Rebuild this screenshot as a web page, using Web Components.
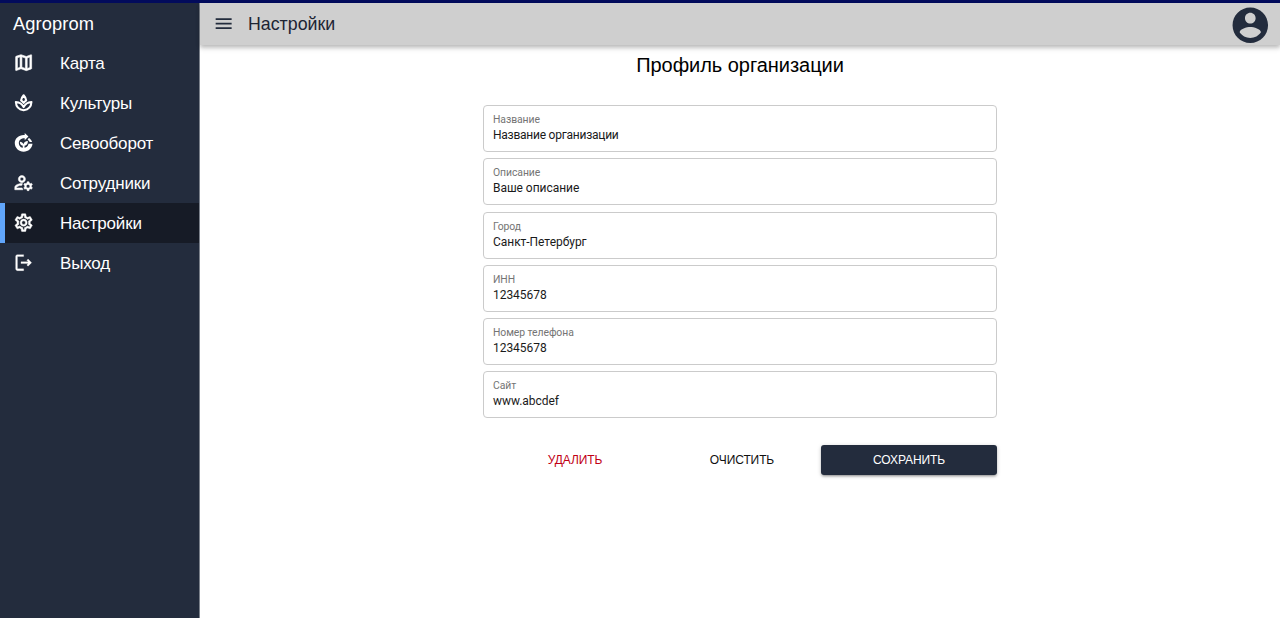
<!DOCTYPE html>
<html lang="ru">
<head>
<meta charset="utf-8">
<title>Agroprom</title>
<style>html,body{margin:0;height:100%;overflow:hidden;background:#fff}</style>
</head>
<body>
<agro-app></agro-app>
<script>
const ICONS = {
  map: '<path d="M20.5 3l-.16.03L15 5.1 9 3 3.36 4.9c-.21.07-.36.25-.36.48V20.5c0 .28.22.5.5.5l.16-.03L9 18.9l6 2.1 5.64-1.9c.21-.07.36-.25.36-.48V3.5c0-.28-.22-.5-.5-.5zM10 5.47l4 1.4v11.66l-4-1.4V5.47zm-5 .99l3-1.01v11.7l-3 1.16V6.46zm14 11.08l-3 1.01V6.86l3-1.16v11.84z" stroke="currentColor" stroke-width=".7"/>',
  spa: '<g fill="none" stroke="currentColor" stroke-width="2.300" stroke-linejoin="round"><path d="M12 20.6C6.400 19.600 3.400 16.200 3.200 11.200c4.400.300 7.200 2.300 8.800 5.900 1.600-3.600 4.400-5.600 8.800-5.900-.2 5-3.200 8.400-8.800 9.400z"/><path d="M9.100 9.400C9.600 7 10.500 5.300 12 3.700c1.500 1.600 2.400 3.300 2.900 5.700-1.200.8-2.100 1.700-2.900 2.800-.8-1.100-1.700-2-2.900-2.800z"/></g>',
  compost: '<path d="M13.200 1L17.400 5.200l-4.200 4.200V7C9.400 6.600 6.600 9.200 6.600 12.300c0 3.200 2.400 5.600 5.400 5.600 2.900 0 5-1.900 5.500-4.600H22C21.400 18.600 17.200 22.200 12 22.200 6.300 22.200 2 17.800 2 12.400 2 7.100 6.600 2.800 13.200 3.300z"/><path d="M11 18.500v-3C8.800 15.200 7.700 13.500 7.700 11c2 0 3.500 1 4.100 2.800.5-2.300 2-3.600 5-3.700 0 3.300-1.300 5-3.800 5.500v2.900z"/><path d="M17.900 6.400c1.800 1.300 3 2.900 3.600 5h-2.700c-.4-1.200-1.200-2-2.300-2.800z"/>',
  staff: '<path d="M4 18v-.65c0-.34.16-.66.41-.81C6.1 15.53 8.03 15 10 15c.03 0 .05 0 .08.01.1-.7.3-1.370.590-1.980-.22-.02-.44-.03-.67-.03-2.420 0-4.680.670-6.610 1.820-.88.520-1.390 1.500-1.390 2.530V20h9.260c-.42-.6-.75-1.280-.97-2H4zM10 12c2.210 0 4-1.790 4-4s-1.790-4-4-4-4 1.790-4 4 1.790 4 4 4zm0-6c1.100 0 2 .9 2 2s-.9 2-2 2-2-.9-2-2 .9-2 2-2zM20.750 16c0-.22-.03-.42-.06-.63l1.140-1.010-1-1.730-1.450.490c-.32-.27-.68-.48-1.080-.63L18 11h-2l-.3 1.490c-.4.150-.76.360-1.080.630l-1.450-.49-1 1.730 1.140 1.010c-.03.210-.06.410-.06.630s.030.420.060.630l-1.140 1.010 1 1.730 1.450-.49c.320.270.680.480 1.080.630L16 21h2l.3-1.490c.4-.15.760-.36 1.080-.63l1.450.490 1-1.730-1.140-1.010c.030-.21.060-.41.060-.63zM17 18c-1.100 0-2-.9-2-2s.9-2 2-2 2 .9 2 2-.9 2-2 2z" stroke="currentColor" stroke-width=".6"/>',
  gear: '<path d="M19.43 12.98c.04-.32.07-.64.07-.98 0-.34-.03-.66-.07-.98l2.11-1.65c.19-.15.24-.42.12-.64l-2-3.460c-.09-.16-.26-.25-.44-.25-.06 0-.12.010-.17.030l-2.490 1c-.52-.4-1.080-.73-1.690-.98l-.38-2.650C14.460 2.180 14.250 2 14 2h-4c-.25 0-.46.180-.49.420l-.38 2.650c-.61.250-1.170.590-1.690.980l-2.490-1c-.06-.02-.12-.03-.18-.03-.17 0-.34.090-.43.250l-2 3.460c-.13.220-.07.490.120.640l2.110 1.650c-.04.320-.07.650-.07.980 0 .330.030.660.070.980l-2.110 1.650c-.19.150-.24.420-.12.640l2 3.460c.09.160.26.250.44.250.06 0 .12-.01.17-.03l2.490-1c.52.4 1.080.730 1.690.980l.38 2.650c.03.240.24.420.49.420h4c.25 0 .46-.18.49-.42l.38-2.650c.61-.25 1.170-.59 1.690-.98l2.490 1c.06.020.12.030.18.030.17 0 .34-.09.43-.25l2-3.460c.12-.22.070-.49-.12-.64l-2.110-1.650zm-1.980-1.710c.04.310.05.520.05.730 0 .210-.02.430-.05.730l-.14 1.130.89.7 1.080.840-.7 1.210-1.270-.51-1.040-.42-.9.680c-.43.320-.84.560-1.250.730l-1.060.430-.16 1.130-.2 1.350h-1.400l-.19-1.350-.16-1.130-1.060-.43c-.43-.18-.83-.41-1.230-.71l-.91-.7-1.060.430-1.270.510-.7-1.210 1.080-.84.890-.7-.14-1.130c-.03-.31-.05-.54-.05-.74s.02-.43.05-.73l.14-1.130-.89-.7-1.080-.84.7-1.210 1.270.510 1.040.420.9-.68c.43-.32.840-.56 1.250-.73l1.060-.43.160-1.130.2-1.350h1.390l.19 1.350.16 1.130 1.060.430c.43.180.830.410 1.230.710l.91.7 1.060-.43 1.270-.51.7 1.210-1.070.850-.89.7.14 1.130zM12 8c-2.210 0-4 1.790-4 4s1.790 4 4 4 4-1.790 4-4-1.790-4-4-4zm0 6c-1.100 0-2-.9-2-2s.9-2 2-2 2 .9 2 2-.9 2-2 2z" stroke="currentColor" stroke-width=".5"/>',
  logout: '<path d="M17 8l-1.410 1.410L17.170 11H9v2h8.170l-1.580 1.580L17 16l4-4-4-4zM5 5h7V3H5c-1.100 0-2 .9-2 2v14c0 1.100.9 2 2 2h7v-2H5V5z" stroke="currentColor" stroke-width=".3"/>',
  menu: '<path d="M3 18h18v-2H3v2zm0-5h18v-2H3v2zm0-7v2h18V6H3z"/>',
  account: '<path d="M12 2C6.480 2 2 6.480 2 12s4.480 10 10 10 10-4.480 10-10S17.520 2 12 2zm0 3c1.660 0 3 1.340 3 3s-1.340 3-3 3-3-1.340-3-3 1.340-3 3-3zm0 14.200c-2.500 0-4.710-1.280-6-3.220.03-1.990 4-3.080 6-3.080 1.990 0 5.970 1.090 6 3.080-1.290 1.940-3.500 3.220-6 3.220z"/>'
};
function define(name, render) {
  customElements.define(name, class extends HTMLElement {
    connectedCallback() {
      if (!this.shadowRoot) this.attachShadow({mode: 'open'}).innerHTML = render(this);
    }
  });
}
define('agro-icon', el => `
  <style>:host{display:block;flex:none;width:21.3px;height:21.3px}svg{display:block;width:100%;height:100%;fill:currentColor}</style>
  <svg viewBox="0 0 24 24">${ICONS[el.getAttribute('name')]}</svg>`);
define('agro-nav-item', el => `
  <style>
    :host{display:flex;align-items:center;height:40px;box-sizing:border-box;padding:0 0 0 13px;color:#fff;font-size:17px;letter-spacing:-.18px}
    :host([active]){background:#161b26;border-left:5px solid #60a5fa;padding-left:8px}
    agro-icon{margin-right:25.7px}
    span{padding-top:2px}
  </style>
  <agro-icon name="${el.getAttribute('icon')}"></agro-icon><span><slot></slot></span>`);
define('agro-sidebar', () => `
  <style>
    :host{display:block;background:#232c3d;border-right:1px solid #7b818b;box-sizing:border-box;color:#fff}
    .brand{height:40px;line-height:41px;padding-left:13px;font-size:18.3px;letter-spacing:.1px}
  </style>
  <div class="brand">Agroprom</div><slot></slot>`);
define('agro-toolbar', () => `
  <style>
    :host{display:flex;align-items:center;height:42px;box-sizing:border-box;padding:0 8px 0 13px;background:#cfcfcf;color:#232c3d;box-shadow:0 2px 4px #0003,0 4px 5px #0000001a;font-size:17.8px}
    .menu{width:21.3px;height:21.3px;margin:0 13.7px 0 0}
    .user{width:42.6px;height:42.6px;margin:3px 0 0 auto}
    span{color:#1d2433}
  </style>
  <agro-icon class="menu" name="menu"></agro-icon><span><slot></slot></span><agro-icon class="user" name="account"></agro-icon>`);
define('agro-field', el => `
  <style>
    :host{display:block;height:47px;box-sizing:border-box;border:1px solid #cbcbcb;border-radius:4px;padding:7px 9px 0;font-family:Roboto,"Liberation Sans",sans-serif}
    .label{font-size:10.4px;line-height:14px;color:#747474;letter-spacing:-.07px}
    .value{font-size:12px;line-height:16px;color:#1a1a1a;letter-spacing:var(--value-spacing,-.04px)}
  </style>
  <div class="label">${el.getAttribute('label')}</div><div class="value"><slot></slot></div>`);
define('agro-button', () => `
  <style>
    :host{display:flex;align-items:center;justify-content:center;height:30px;box-sizing:border-box;padding-bottom:1px;border-radius:3px;font-size:12px;letter-spacing:-.1px;color:#111}
    :host([kind=danger]){color:#c10015}
    :host([kind=primary]){background:#232c3d;color:#fff;box-shadow:0 1px 4px #0003,0 2px 2px #00000024,0 3px 1px -2px #0000001f}
  </style><span><slot></slot></span>`);
define('agro-profile', () => `
  <style>
    :host{display:block;width:514px;margin:0 auto}
    h1{margin:0 0 29px;padding-top:9px;height:22px;line-height:22px;text-align:center;font-size:20px;font-weight:400;color:#000;letter-spacing:-.04px}
    .fields{display:grid;row-gap:6.25px}
    .wide-text{--value-spacing:-.24px}
    .actions{display:grid;grid-template-columns:184px 150px 4px 176px;margin-top:26.9px}
    .actions agro-button:last-child{grid-column:4}
  </style>
  <h1>Профиль организации</h1>
  <div class="fields">
    <agro-field class="wide-text" label="Название">Название организации</agro-field>
    <agro-field label="Описание">Ваше описание</agro-field>
    <agro-field label="Город">Санкт-Петербург</agro-field>
    <agro-field label="ИНН">12345678</agro-field>
    <agro-field label="Номер телефона">12345678</agro-field>
    <agro-field label="Сайт">www.abcdef</agro-field>
  </div>
  <div class="actions">
    <agro-button kind="danger">УДАЛИТЬ</agro-button><agro-button>ОЧИСТИТЬ</agro-button><agro-button kind="primary">СОХРАНИТЬ</agro-button>
  </div>`);
define('agro-app', () => `
  <style>
    :host{display:grid;grid-template-columns:200px 1fr;height:100vh;box-sizing:border-box;border-top:3px solid #020b5c;font-family:"Liberation Sans",Arial,sans-serif;background:#fff}
    main{min-width:0}
  </style>
  <agro-sidebar>
    <agro-nav-item icon="map">Карта</agro-nav-item>
    <agro-nav-item icon="spa">Культуры</agro-nav-item>
    <agro-nav-item icon="compost">Севооборот</agro-nav-item>
    <agro-nav-item icon="staff">Сотрудники</agro-nav-item>
    <agro-nav-item icon="gear" active>Настройки</agro-nav-item>
    <agro-nav-item icon="logout">Выход</agro-nav-item>
  </agro-sidebar>
  <main><agro-toolbar>Настройки</agro-toolbar><agro-profile></agro-profile></main>`);
</script>
</body>
</html>
